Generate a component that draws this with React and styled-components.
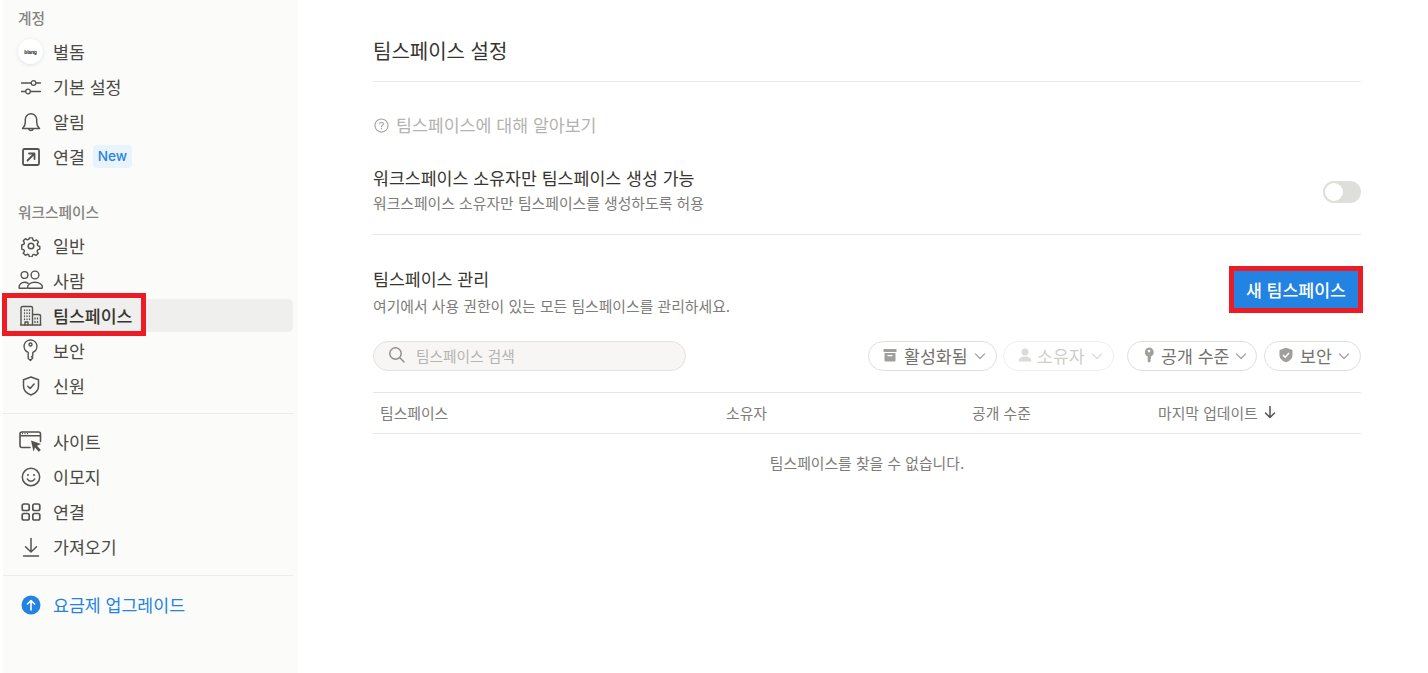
import React from "react";
import styled, { createGlobalStyle } from "styled-components";

const Global = createGlobalStyle`
  html, body { margin: 0; padding: 0; background: #fff; }
  body { font-family: "Inter", "Noto Sans CJK KR", sans-serif; color: #37352f; overflow: hidden; }
  * { box-sizing: border-box; }
`;

const Page = styled.div`
  display: flex;
  width: 1428px;
  height: 673px;
  padding-left: 3px;
  overflow: hidden;
`;

const Sidebar = styled.nav`
  width: 295px;
  height: 673px;
  flex: none;
  background: #fbfbfa;
  padding: 0 5px 0 0;
  display: flex;
  flex-direction: column;
`;

const SectionLabel = styled.div`
  font-size: 14.7px;
  line-height: 18px;
  padding-top: 1px;
  height: 18px;
  font-weight: 500;
  color: #85847f;
  padding-left: 15px;
  margin-top: ${p => p.$top}px;
  margin-bottom: ${p => p.$bottom}px;
`;

const NavList = styled.div`
  display: flex;
  flex-direction: column;
  gap: 2px;
`;

const NavRow = styled.div`
  position: relative;
  display: flex;
  align-items: center;
  height: 33px;
  padding-left: 15px;
  border-radius: 5px;
  font-size: 17.3px;
  line-height: 24px;
  font-weight: ${p => (p.$active ? 500 : 400)};
  color: ${p => (p.$blue ? "#2383e2" : p.$active ? "#37352f" : "#4a4944")};
  background: ${p => (p.$active ? "#efefed" : "transparent")};
`;

const NavText = styled.span`
  padding-top: 2px;
`;

const NavIcon = styled.span`
  width: 25px;
  height: 25px;
  flex: none;
  margin-right: 10px;
  display: flex;
  align-items: center;
  justify-content: center;
  color: #55534e;
`;

const Avatar = styled.span`
  width: 25px;
  height: 25px;
  border-radius: 50%;
  background: #fff;
  box-shadow: 0 1px 4px rgba(0,0,0,.1);
  display: flex;
  align-items: center;
  justify-content: center;
  font-family: "Liberation Sans", sans-serif;
  font-size: 5px;
  font-weight: 700;
  color: #222;
  letter-spacing: -0.2px;
`;

const NewBadge = styled.span`
  margin-left: 8px;
  height: 23px;
  padding: 0 5px;
  border-radius: 4px;
  background: #e9f3fb;
  color: #2383e2;
  font-size: 13.6px;
  font-weight: 500;
  line-height: 23px;
`;

const SideDivider = styled.div`
  height: 1px;
  background: #ebebe9;
  margin: ${p => p.$top}px 0 ${p => p.$bottom}px;
`;

const RedFrame = styled.span`
  position: absolute;
  pointer-events: none;
  border: 5px solid #ed1c24;
  left: -1px;
  top: -6px;
  width: 144px;
  height: 43px;
`;

const Main = styled.main`
  flex: 1;
  padding: 0 67px 0 75px;
  display: flex;
  flex-direction: column;
`;

const Title = styled.h1`
  margin: 0;
  height: 82px;
  padding-top: 39px;
  font-size: 20px;
  line-height: 27px;
  font-weight: 400;
  color: #37352f;
  border-bottom: 1px solid #ebebe9;
`;

const HelpLink = styled.div`
  margin-top: 32px;
  height: 22px;
  display: flex;
  align-items: center;
  gap: 7px;
  padding-left: 1px;
  font-size: 17.3px;
  line-height: 22px;
  color: #b4b3af;
`;

const HelpText = styled.span`
  padding-top: 2px;
`;

const SettingRow = styled.section`
  display: flex;
  align-items: flex-start;
  justify-content: space-between;
  margin-top: ${p => p.$top}px;
  padding-bottom: ${p => p.$pb}px;
  border-bottom: ${p => (p.$line ? "1px solid #e6e6e4" : "none")};
`;

const RowName = styled.div`
  font-size: 17.3px;
  line-height: 22px;
  height: 22px;
  padding-top: 1px;
  color: #37352f;
`;

const RowDesc = styled.div`
  margin-top: ${p => p.$gap}px;
  font-size: 14.85px;
  line-height: 20px;
  height: 20px;
  padding-top: 1px;
  color: #7d7c78;
`;

const Toggle = styled.span`
  width: 38px;
  height: 22px;
  margin-top: 14px;
  border-radius: 11px;
  background: #dededb;
  padding: 2px;
  display: block;
`;

const Knob = styled.span`
  display: block;
  width: 18px;
  height: 18px;
  border-radius: 50%;
  background: #fff;
`;

const ButtonFrame = styled.div`
  position: relative;
  margin-right: 3px;
  margin-top: 3px;
`;

const PrimaryButton = styled.button`
  display: block;
  width: 124px;
  height: 37px;
  border: 0;
  padding: 0;
  background: #2383e2;
  color: #fff;
  font-family: inherit;
  font-size: 17.3px;
  font-weight: 500;
`;

const ButtonRed = styled.span`
  position: absolute;
  pointer-events: none;
  left: -5px;
  top: -5px;
  right: -5px;
  bottom: -5px;
  border: 5px solid #ed1c24;
`;

const Controls = styled.div`
  display: flex;
  align-items: center;
  justify-content: space-between;
  margin-top: 25px;
  height: 30px;
`;

const Search = styled.div`
  width: 313px;
  height: 30px;
  border-radius: 15px;
  background: #f7f6f4;
  border: 1px solid #e3e2df;
  display: flex;
  align-items: center;
  padding: 0 0 2px 14px;
  gap: 10px;
  font-size: 14.7px;
  color: #b5b4b0;
`;

const Filters = styled.div`
  display: flex;
  align-items: center;
`;

const Pill = styled.div`
  height: 30px;
  border-radius: 15px;
  border: 1px solid ${p => (p.$off ? "#efefed" : "#dfdfdc")};
  display: flex;
  align-items: center;
  width: ${p => p.$w}px;
  margin-left: ${p => p.$ml}px;
  padding: 0 0 2px 13px;
  gap: ${p => p.$gap}px;
  font-size: 17.3px;
  color: ${p => (p.$off ? "#cfcecb" : "#73726e")};
  white-space: nowrap;
`;

const PillChevron = styled.span`
  display: flex;
  margin: 2px 0 0 ${p => p.$ml}px;
`;

const TableHead = styled.div`
  margin-top: 21px;
  height: 42px;
  display: grid;
  grid-template-columns: 346px 246px 186px 1fr;
  align-items: center;
  border-top: 1px solid #e6e6e4;
  border-bottom: 1px solid #e6e6e4;
  font-size: 14.85px;
  color: #7d7c78;
`;

const HeadCell = styled.div`
  padding: 0 0 2px 7px;
  display: flex;
  align-items: center;
  gap: 5px;
`;

const Empty = styled.div`
  margin-top: 19px;
  font-size: 14.85px;
  line-height: 22px;
  text-align: center;
  color: #7d7c78;
`;

const S = { fill: "none", stroke: "currentColor", strokeWidth: 1.5, strokeLinecap: "round", strokeLinejoin: "round" };
const Ico = ({ children, s = 22, vb = 22, ...rest }) => <svg width={s} height={s} viewBox={`0 0 ${vb} ${vb}`} {...S} {...rest}>{children}</svg>;

const Sliders = () => <Ico strokeWidth="1.300"><path d="M1.500 7h9.500M16 7h4.500M1.500 15.500h4M10.500 15.500h10" /><circle cx="13.500" cy="7" r="2.300" /><circle cx="8" cy="15.500" r="2.300" /></Ico>;
const Bell = () => <Ico><path d="M2.500 17.500c1.700-1.500 2.800-2.700 2.800-6V8.500a5.700 5.700 0 0 1 11.400 0v3c0 3.300 1.100 4.500 2.800 6z" /><path d="M8.700 17.800a2.400 2.400 0 0 0 4.600 0" /></Ico>;
const ArrowBox = () => <Ico><rect x="3" y="3" width="16" height="16" rx="1.500" strokeWidth="1.800" /><path d="M7.500 14.500l7-7M9 7.500h5.500V13" strokeWidth="1.800" /></Ico>;
const Gear = () => <Ico><circle cx="11" cy="11" r="2.800" /><path d="M9.400 2.500h3.200l.5 2.400 1.500.7 2.200-1 2 2.300-1.300 2 .5 1.600 2.200 1v2.800l-2.300.800-.5 1.500 1.100 2.100-2.300 2.200-2-1.200-1.500.6-.7 2.200H9.300l-.6-2.300-1.400-.6-2.100 1.100-2.300-2.200 1.200-2-.6-1.500-2.200-.8V10l2.300-.8.500-1.600-1.200-2 2.300-2.300 2.100 1.200 1.500-.7z" transform="translate(.5 .5) scale(.955)" /></Ico>;
const People = () => <Ico s={25} vb={25} strokeWidth="1.400"><circle cx="6.500" cy="7" r="3.400" /><path d="M1 19.500c0-3 2.500-5.300 5.500-5.300 1.500 0 2.700.4 3.700 1.200M1 19.500c0 .5.400.8.800.8h6.700" /><circle cx="17" cy="7" r="3.900" /><path d="M9.500 19.500c0-3 3.200-5.300 7.500-5.300s7.500 2.300 7.500 5.300c0 .5-.4.8-.9.800H10.400c-.5 0-.9-.3-.9-.8z" /></Ico>;
const Building = () => <Ico s={23} vb={23} strokeWidth="1.400"><path d="M2 21V4c0-1 .5-1.500 1.500-1.500h8.500c1 0 1.500.5 1.500 1.500v17M13.500 10.500h6c1 0 2 .5 2 1.500v9M1.500 21h20.500" /><path d="M5.500 6v.5M8 6v.5M10.500 6v.5M5.500 9v.5M8 9v.5M10.500 9v.5M5.500 12v.5M8 12v.5M10.500 12v.5M5.500 15v.5M8 15v.5M10.500 15v.5M16 14v1M18.500 14v1M16 17.500v1M18.500 17.500v1" strokeWidth="1.300" /><path d="M6 21v-3h3v3" /></Ico>;
const Key = () => <Ico s={25} vb={25} strokeWidth="1.400"><path d="M12.500 2a6.400 6.400 0 0 1 2.300 12.400v3.300l-1.300 1.100 1.300 1.100-2.300 2.600-2.300-2.100v-6A6.400 6.400 0 0 1 12.500 2z" /><circle cx="12.500" cy="6.500" r="1.500" /></Ico>;
const Shield = () => <Ico><path d="M11 2l7.500 2.700v6.300c0 4.500-3.500 7.500-7.500 9-4-1.500-7.500-4.500-7.500-9V4.700z" /><path d="M7.800 11.200l2.300 2.300 4-4.500" /></Ico>;
const Site = () => <Ico s={25} vb={25}><path d="M12 18.500H4c-1.200 0-2-.8-2-2V5c0-1.200.8-2 2-2h16.500c1.200 0 2 .8 2 2v7.500" strokeWidth="1.600" /><path d="M2.500 6.700h19.500" strokeWidth="1.400" /><path d="M4 4.700h1M6.500 4.700h1M9 4.700h1" strokeWidth="1.200" strokeLinecap="butt" /><path d="M13 11.500l10 3.500-4 1.700 3.800 4.300-2 1.800-3.800-4.300-1.500 4.200z" fill="currentColor" stroke="none" /></Ico>;
const Smile = () => <Ico><circle cx="11" cy="11" r="8.700" /><circle cx="8" cy="9" r="1" fill="currentColor" stroke="none" /><circle cx="14" cy="9" r="1" fill="currentColor" stroke="none" /><path d="M7.300 13c.8 1.500 2 2.200 3.700 2.200s2.900-.7 3.700-2.200" /></Ico>;
const Grid = () => <Ico><rect x="2.200" y="3" width="7" height="6.500" rx="1.800" strokeWidth="1.700" /><rect x="12.800" y="3" width="7" height="6.500" rx="1.800" strokeWidth="1.700" /><rect x="2.200" y="12.500" width="7" height="6.500" rx="1.800" strokeWidth="1.700" /><rect x="12.800" y="12.500" width="7" height="6.500" rx="1.800" strokeWidth="1.700" /></Ico>;
const Down = () => <Ico><path d="M11 2.500v13.500M5.500 10.800L11 16l5.500-5.200M3.500 20h15" /></Ico>;
const Upgrade = () => <svg width="20" height="20" viewBox="0 0 20 20"><circle cx="10" cy="10" r="9.500" fill="#2383e2" /><path d="M10 15V6M6.500 9L10 5.500 13.500 9" fill="none" stroke="#fff" strokeWidth="1.600" strokeLinecap="round" strokeLinejoin="round" /></svg>;
const Help = () => <svg width="15" height="15" viewBox="0 0 16 16" fill="none" stroke="#a5a4a0" strokeWidth="1.200"><circle cx="8" cy="8" r="7" /><path d="M6 6.300c0-1.200.9-1.800 2-1.800s2 .7 2 1.700c0 1.500-2 1.500-2 3" strokeLinecap="round" /><circle cx="8" cy="11.400" r=".8" fill="#a5a4a0" stroke="none" /></svg>;
const SearchIcon = () => <svg width="18" height="18" viewBox="0 0 18 18" fill="none" stroke="#918f8a" strokeWidth="1.500" strokeLinecap="round"><circle cx="7.500" cy="7.500" r="5.700" /><path d="M11.800 11.800L16 16" /></svg>;
const Chevron = ({ $light }) => <svg width="12" height="12" viewBox="0 0 12 12" fill="none" stroke={$light ? "#dcdbd8" : "#a5a4a0"} strokeWidth="1.200" strokeLinecap="round" strokeLinejoin="round"><path d="M1.500 4L6 8.500 10.500 4" /></svg>;
const Archive = () => <svg width="16" height="16" viewBox="0 0 16 16" fill="#a09f9b"><rect x="1.500" y="2" width="13" height="3" rx=".5" /><path d="M2.500 6h11v7.500a1 1 0 0 1-1 1h-9a1 1 0 0 1-1-1zM5.500 8v1.300h5V8z" fillRule="evenodd" /></svg>;
const Person = () => <svg width="16" height="16" viewBox="0 0 16 16" fill="#dcdbd8"><circle cx="8" cy="5" r="3.500" /><path d="M1.500 14.500c0-3.500 3-5 6.500-5s6.500 1.500 6.500 5z" /></svg>;
const KeySolid = () => <svg width="16" height="16" viewBox="0 0 16 16" fill="#a09f9b"><path d="M8 .5a4.800 4.800 0 0 1 2 9.100v2.400l-1 .8 1 .9-2 2-1.300-1.200V9.600A4.800 4.800 0 0 1 8 .5zm0 2.300a1.300 1.300 0 1 0 0 2.600 1.300 1.300 0 0 0 0-2.600z" fillRule="evenodd" /></svg>;
const ShieldSolid = () => <svg width="16" height="16" viewBox="0 0 16 16"><path d="M8 .8l6.500 2.300v5.200c0 3.500-3 5.800-6.500 7-3.500-1.200-6.500-3.500-6.500-7V3.100z" fill="#a09f9b" /><path d="M5 8l2.200 2.200L11 6" fill="none" stroke="#fff" strokeWidth="1.500" /></svg>;
const SortArrow = () => <svg width="14" height="14" viewBox="0 0 14 14" fill="none" stroke="#55534e" strokeWidth="1.500" strokeLinecap="round" strokeLinejoin="round"><path d="M7 1.500v11M2.500 8L7 12.500 11.500 8" /></svg>;

export default function App() {
  return (
    <Page>
      <Global />
      <Sidebar>
        <SectionLabel $top={9} $bottom={8}>계정</SectionLabel>
        <NavList>
          <NavRow><NavIcon><Avatar>blang</Avatar></NavIcon><NavText>별돔</NavText></NavRow>
          <NavRow><NavIcon><Sliders /></NavIcon><NavText>기본 설정</NavText></NavRow>
          <NavRow><NavIcon><Bell /></NavIcon><NavText>알림</NavText></NavRow>
          <NavRow><NavIcon><ArrowBox /></NavIcon><NavText>연결</NavText><NewBadge>New</NewBadge></NavRow>
        </NavList>
        <SectionLabel $top={30} $bottom={8}>워크스페이스</SectionLabel>
        <NavList>
          <NavRow><NavIcon><Gear /></NavIcon><NavText>일반</NavText></NavRow>
          <NavRow><NavIcon><People /></NavIcon><NavText>사람</NavText></NavRow>
          <NavRow $active><NavIcon><Building /></NavIcon><NavText>팀스페이스</NavText><RedFrame /></NavRow>
          <NavRow><NavIcon><Key /></NavIcon><NavText>보안</NavText></NavRow>
          <NavRow><NavIcon><Shield /></NavIcon><NavText>신원</NavText></NavRow>
        </NavList>
        <SideDivider $top={11} $bottom={11} />
        <NavList>
          <NavRow><NavIcon><Site /></NavIcon><NavText>사이트</NavText></NavRow>
          <NavRow><NavIcon><Smile /></NavIcon><NavText>이모지</NavText></NavRow>
          <NavRow><NavIcon><Grid /></NavIcon><NavText>연결</NavText></NavRow>
          <NavRow><NavIcon><Down /></NavIcon><NavText>가져오기</NavText></NavRow>
        </NavList>
        <SideDivider $top={12} $bottom={12} />
        <NavRow $blue><NavIcon><Upgrade /></NavIcon><NavText>요금제 업그레이드</NavText></NavRow>
      </Sidebar>
      <Main>
        <Title>팀스페이스 설정</Title>
        <HelpLink><Help /><HelpText>팀스페이스에 대해 알아보기</HelpText></HelpLink>
        <SettingRow $top={31} $pb={21} $line>
          <div>
            <RowName>워크스페이스 소유자만 팀스페이스 생성 가능</RowName>
            <RowDesc $gap={4}>워크스페이스 소유자만 팀스페이스를 생성하도록 허용</RowDesc>
          </div>
          <Toggle><Knob /></Toggle>
        </SettingRow>
        <SettingRow $top={33} $pb={0}>
          <div>
            <RowName>팀스페이스 관리</RowName>
            <RowDesc $gap={6}>여기에서 사용 권한이 있는 모든 팀스페이스를 관리하세요.</RowDesc>
          </div>
          <ButtonFrame><PrimaryButton>새 팀스페이스</PrimaryButton><ButtonRed /></ButtonFrame>
        </SettingRow>
        <Controls>
          <Search><SearchIcon />팀스페이스 검색</Search>
          <Filters>
            <Pill $w={129} $gap={6}><Archive />활성화됨<PillChevron $ml={0}><Chevron /></PillChevron></Pill>
            <Pill $w={111} $ml={6} $gap={4} $off><Person />소유자<PillChevron $ml={2}><Chevron $light /></PillChevron></Pill>
            <Pill $w={130} $ml={13} $gap={4}><KeySolid />공개 수준<PillChevron $ml={2}><Chevron /></PillChevron></Pill>
            <Pill $w={97} $ml={7} $gap={6}><ShieldSolid />보안<PillChevron $ml={0}><Chevron /></PillChevron></Pill>
          </Filters>
        </Controls>
        <TableHead>
          <HeadCell>팀스페이스</HeadCell>
          <HeadCell>소유자</HeadCell>
          <HeadCell>공개 수준</HeadCell>
          <HeadCell>마지막 업데이트<SortArrow /></HeadCell>
        </TableHead>
        <Empty>팀스페이스를 찾을 수 없습니다.</Empty>
      </Main>
    </Page>
  );
}
